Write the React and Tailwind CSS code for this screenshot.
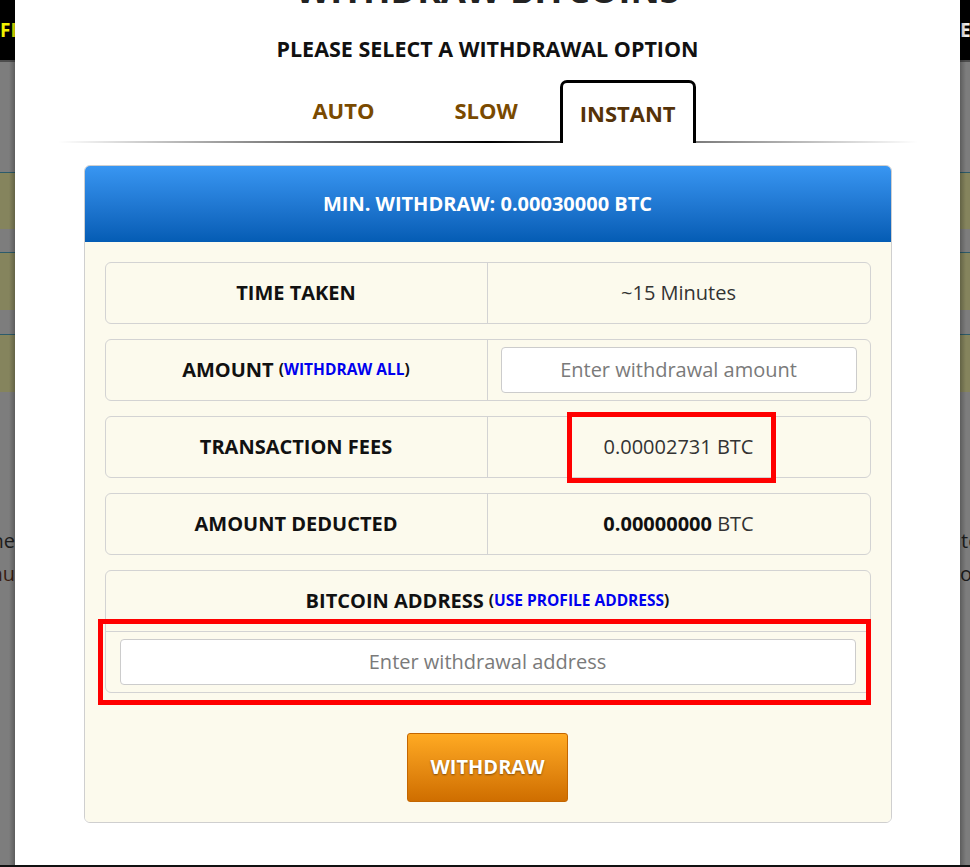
// App.jsx – withdraw bitcoin modal (instant option)
import React from 'react';

const ROWS = [
  { label: 'TIME TAKEN', value: '~15 Minutes' },
];

function LeftBackdrop() {
  return (
    <div className="relative flex w-[15px] shrink-0 flex-col overflow-hidden bg-[#7d7d7d]">
      <div className="flex h-[60px] items-center overflow-hidden whitespace-nowrap bg-black text-[19px] font-bold text-[#f2f200]">
        FF
      </div>
      <div className="h-[2px] bg-[#4d4d4d]" />
      <div className="mt-[110px] h-[57px] border-t border-[#2c5b6b] bg-[#85845d]" />
      <div className="mt-[23px] h-[58px] border-t border-[#2c5b6b] bg-[#85845d]" />
      <div className="mt-[24px] h-[58px] border-t border-[#2c5b6b] bg-[#85845d]" />
      <div className="mt-[132px] flex justify-end whitespace-nowrap text-[20px] leading-[33px] text-[#1c1c1c]">
        the
      </div>
      <div className="flex justify-end whitespace-nowrap text-[20px] leading-[33px] text-[#3a1c10]">
        menu
      </div>
      {/* modal shadow */}
      <div className="pointer-events-none absolute inset-y-0 right-0 w-[6px] bg-linear-to-r from-transparent to-[#00000040]" />
    </div>
  );
}

function RightBackdrop() {
  return (
    <div className="relative flex w-[10px] shrink-0 flex-col overflow-hidden bg-[#7d7d7d]">
      <div className="flex h-[60px] items-center overflow-hidden whitespace-nowrap bg-black text-[19px] font-bold text-[#eeeeee]">
        EARN
      </div>
      <div className="h-[2px] bg-[#4d4d4d]" />
      <div className="mt-[110px] h-[57px] border-t border-[#2c5b6b] bg-[#85845d]" />
      <div className="mt-[23px] h-[58px] border-t border-[#2c5b6b] bg-[#85845d]" />
      <div className="mt-[24px] h-[58px] border-t border-[#2c5b6b] bg-[#85845d]" />
      <div className="mt-[132px] whitespace-nowrap pl-[1px] text-[20px] leading-[33px] text-[#1c1c1c]">
        to
      </div>
      <div className="whitespace-nowrap text-[20px] leading-[33px] text-[#1c1c1c]">
        o<span className="text-[#b86a00]">k</span>
      </div>
      <div className="pointer-events-none absolute inset-y-0 left-0 w-[6px] bg-linear-to-l from-transparent to-[#00000040]" />
    </div>
  );
}

function InfoRow({ label, children }) {
  return (
    <div className="grid h-[62px] grid-cols-2 rounded-[6px] border border-[#d3d3d3]">
      <div className="flex items-center justify-center border-r border-[#d3d3d3] text-[20px] font-bold text-[#111]">
        {label}
      </div>
      <div className="flex items-center justify-center text-[20px] text-[#333]">
        {children}
      </div>
    </div>
  );
}

export default function App() {
  return (
    <div className="flex h-[867px] w-[970px] flex-col overflow-hidden bg-[#111] font-['Open_Sans',sans-serif]">
      <div className="flex h-[865px]">
        <LeftBackdrop />

        {/* ── Modal ─────────────────────────────── */}
        <div className="relative flex-1 overflow-hidden bg-white">
          <h1 className="mt-[-28px] text-center text-[36px] font-bold leading-none text-[#222]">
            WITHDRAW BITCOINS
          </h1>
          <h2 className="mt-[30px] text-center text-[21.5px] font-bold leading-none text-[#111]">
            PLEASE SELECT A WITHDRAWAL OPTION
          </h2>

          {/* ── Tabs ─────────────────────────────── */}
          <div className="mt-[20px] flex items-start justify-center pl-[12px]">
            <button type="button" className="border-[3px] border-transparent px-[18px] pt-[16px] text-[22px] font-bold leading-none text-[#7a4a00]">
              AUTO
            </button>
            <button type="button" className="ml-[38px] border-[3px] border-transparent px-[18px] pt-[16px] text-[22px] font-bold leading-none text-[#7a4a00]">
              SLOW
            </button>
            <button type="button" className="relative z-10 -mb-[2px] ml-[21px] rounded-t-[7px] border-[3px] border-b-0 border-black bg-white px-[17px] pb-[19px] pt-[19px] text-[22px] font-bold leading-none text-[#553208]">
              INSTANT
            </button>
          </div>
          <div className="mx-auto h-[2px] w-[860px] bg-linear-to-r from-transparent via-black to-transparent" />

          {/* ── Card ─────────────────────────────── */}
          <div className="mx-auto mt-[22px] w-[808px] overflow-hidden rounded-[6px] border border-[#cfcfcf]">
            <div className="flex h-[76px] items-center justify-center bg-linear-to-b from-[#3896f2] to-[#045cb4] text-[20px] font-bold text-white">
              MIN. WITHDRAW: 0.00030000 BTC
            </div>
            <div className="flex flex-col bg-[#fcfaed] px-[20px] pb-[20px] pt-[20px]">
              <div className="flex flex-col gap-[15px]">
                {ROWS.map(r => (
                  <InfoRow key={r.label} label={r.label}>{r.value}</InfoRow>
                ))}
                <div className="grid h-[62px] grid-cols-2 rounded-[6px] border border-[#d3d3d3]">
                  <div className="flex items-center justify-center gap-[5px] border-r border-[#d3d3d3]">
                    <span className="text-[20px] font-bold text-[#111]">AMOUNT</span>
                    <span className="text-[15.5px] font-bold text-[#111]">
                      (<span className="text-[#0000ee]">WITHDRAW ALL</span>)
                    </span>
                  </div>
                  <div className="flex items-center px-[13px]">
                    <input
                      type="text"
                      placeholder="Enter withdrawal amount"
                      className="h-[46px] w-full rounded-[4px] border border-[#cccccc] bg-white text-center text-[20px] text-[#333] outline-none placeholder:text-[#7a7a7a]"
                    />
                  </div>
                </div>
                <InfoRow label="TRANSACTION FEES">0.00002731 BTC</InfoRow>
                <InfoRow label="AMOUNT DEDUCTED">
                  <span className="font-bold text-[#111]">0.00000000</span>&nbsp;BTC
                </InfoRow>
                <div className="flex flex-col rounded-[6px] border border-[#d3d3d3]">
                  <div className="flex h-[61px] items-center justify-center gap-[5px] border-b border-[#d3d3d3]">
                    <span className="text-[20px] font-bold text-[#111]">BITCOIN ADDRESS</span>
                    <span className="text-[15.5px] font-bold text-[#111]">
                      (<span className="text-[#0000ee]">USE PROFILE ADDRESS</span>)
                    </span>
                  </div>
                  <div className="px-[14px] py-[7px]">
                    <input
                      type="text"
                      placeholder="Enter withdrawal address"
                      className="h-[46px] w-full rounded-[4px] border border-[#cccccc] bg-white text-center text-[20px] text-[#333] outline-none placeholder:text-[#7a7a7a]"
                    />
                  </div>
                </div>
              </div>

              <button
                type="button"
                className="mx-auto mt-[40px] h-[69px] w-[161px] rounded-[3px] border border-[#c46600] bg-linear-to-b from-[#ffaa22] to-[#cf6e00] text-[20px] font-bold text-white [text-shadow:0_1px_2px_rgba(0,0,0,0.45)]"
              >
                WITHDRAW
              </button>
            </div>
          </div>

          {/* ── Red annotation boxes ─────────────── */}
          <div className="pointer-events-none absolute left-[552px] top-[412px] h-[71px] w-[209px] border-[5px] border-[#ff0000]" />
          <div className="pointer-events-none absolute left-[83px] top-[619px] h-[86px] w-[773px] border-[5px] border-[#ff0000]" />
        </div>

        <RightBackdrop />
      </div>
    </div>
  );
}
